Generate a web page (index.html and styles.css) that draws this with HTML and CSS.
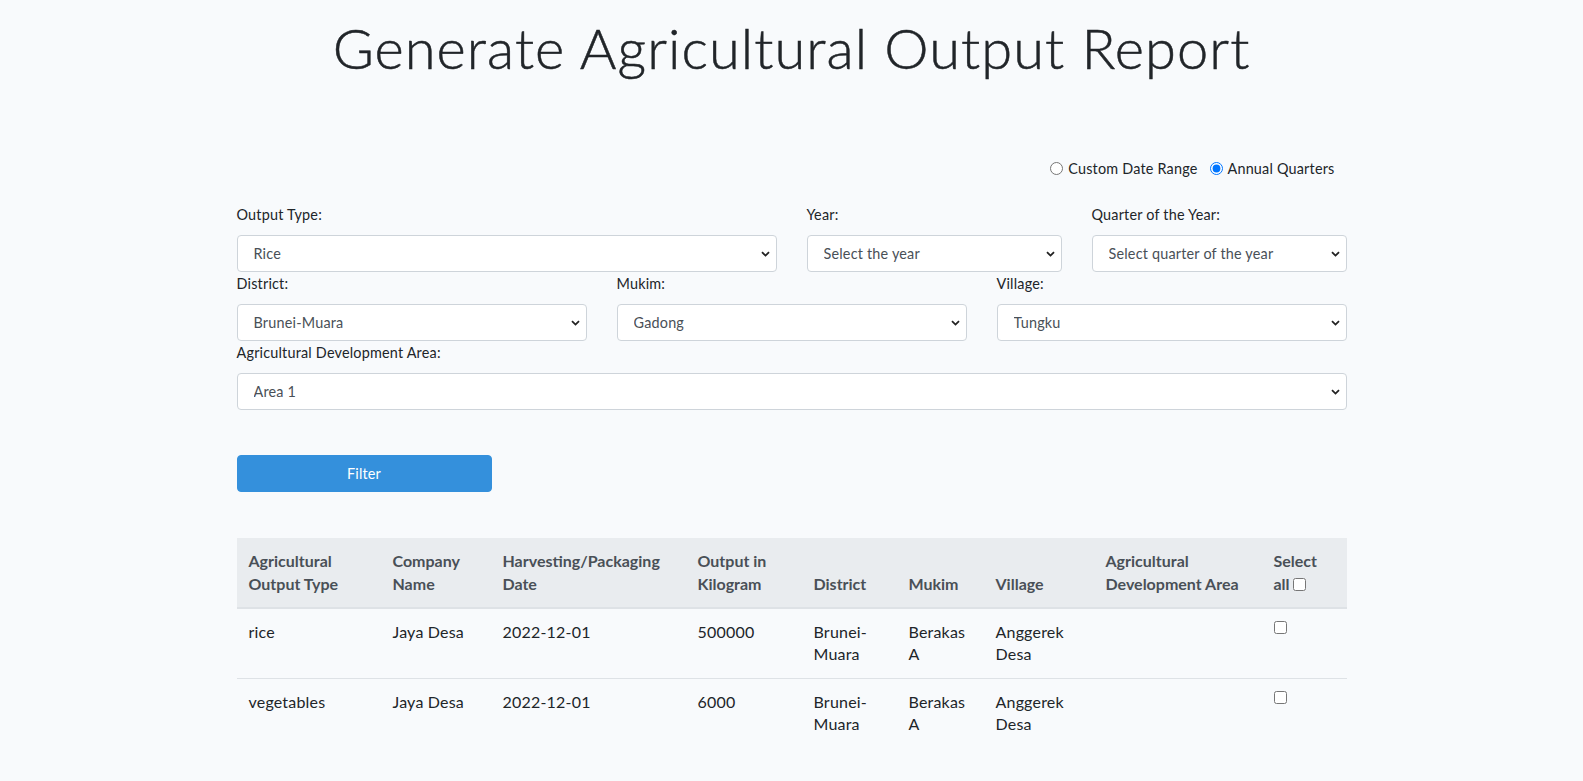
FILE: index.html
```html
<!DOCTYPE html>
<html lang="en">
<head>
<meta charset="utf-8">
<title>Generate Agricultural Output Report</title>
<link rel="stylesheet" href="styles.css">
</head>
<body>
<div class="container">
  <h1 class="title">Generate Agricultural Output Report</h1>

  <div class="mode-row">
    <label class="check-inline"><input type="radio" name="mode" class="radio"> Custom Date Range</label>
    <label class="check-inline"><input type="radio" name="mode" class="radio" checked> Annual Quarters</label>
  </div>

  <div class="form-row">
    <div class="field span-6">
      <label class="field-label">Output Type:</label>
      <select class="select"><option>Rice</option></select>
    </div>
    <div class="field span-3">
      <label class="field-label">Year:</label>
      <select class="select"><option>Select the year</option></select>
    </div>
    <div class="field span-3">
      <label class="field-label">Quarter of the Year:</label>
      <select class="select"><option>Select quarter of the year</option></select>
    </div>
  </div>

  <div class="form-row">
    <div class="field span-4">
      <label class="field-label">District:</label>
      <select class="select"><option>Brunei-Muara</option></select>
    </div>
    <div class="field span-4">
      <label class="field-label">Mukim:</label>
      <select class="select"><option>Gadong</option></select>
    </div>
    <div class="field span-4">
      <label class="field-label">Village:</label>
      <select class="select"><option>Tungku</option></select>
    </div>
  </div>

  <div class="form-row">
    <div class="field span-12">
      <label class="field-label">Agricultural Development Area:</label>
      <select class="select"><option>Area 1</option></select>
    </div>
  </div>

  <div class="button-row">
    <button class="btn-primary" type="button">Filter</button>
  </div>

  <table class="table">
    <colgroup>
      <col class="w-type"><col class="w-company"><col class="w-date"><col class="w-output"><col class="w-district"><col class="w-mukim"><col class="w-village"><col class="w-area"><col class="w-select">
    </colgroup>
    <thead>
      <tr>
        <th>Agricultural Output Type</th>
        <th>Company Name</th>
        <th>Harvesting/Packaging Date</th>
        <th>Output in Kilogram</th>
        <th>District</th>
        <th>Mukim</th>
        <th>Village</th>
        <th>Agricultural Development Area</th>
        <th>Select all <input type="checkbox" class="checkbox"></th>
      </tr>
    </thead>
    <tbody>
      <tr>
        <td>rice</td>
        <td>Jaya Desa</td>
        <td>2022-12-01</td>
        <td>500000</td>
        <td>Brunei-Muara</td>
        <td>Berakas A</td>
        <td>Anggerek Desa</td>
        <td></td>
        <td><input type="checkbox" class="checkbox row-check"></td>
      </tr>
      <tr>
        <td>vegetables</td>
        <td>Jaya Desa</td>
        <td>2022-12-01</td>
        <td>6000</td>
        <td>Brunei-Muara</td>
        <td>Berakas A</td>
        <td>Anggerek Desa</td>
        <td></td>
        <td><input type="checkbox" class="checkbox row-check"></td>
      </tr>
    </tbody>
  </table>
</div>
</body>
</html>
```

FILE: styles.css
```css
* { box-sizing: border-box; }

body {
  margin: 0;
  background: #f8fafc;
  color: #212529;
  font-family: "Lato", "Noto Sans", sans-serif;
  font-size: 14.4px;
  line-height: 1.6;
  letter-spacing: 0.2px;
}

.container {
  width: 1110px;
  margin: 0 auto;
}

.title {
  margin: 14px 0 0;
  font-size: 56px;
  font-weight: 300;
  line-height: 1.2;
  letter-spacing: 1.05px;
  text-align: center;
  -webkit-text-stroke: 0.5px currentColor;
}

.mode-row {
  display: flex;
  justify-content: flex-end;
  margin-top: 76px;
}

.check-inline {
  display: inline-flex;
  align-items: center;
  margin-right: 12px;
  line-height: 23px;
}

.radio {
  margin: 0 5px 0 0;
  width: 13px;
  height: 13px;
}

.form-row {
  display: flex;
  gap: 30px;
}

.mode-row + .form-row { margin-top: 23px; }

.field { min-width: 0; }
.span-6 { width: 540px; }
.span-3 { width: 255px; }
.span-4 { width: 350px; }
.span-12 { width: 1110px; }

.field-label {
  display: block;
  margin-bottom: 9px;
  line-height: 23px;
}

.select {
  display: block;
  width: 100%;
  height: 37px;
  padding: 6px 24px 6px 16px;
  font-family: inherit;
  font-size: 14.4px;
  letter-spacing: 0.2px;
  color: #495057;
  background-color: #fff;
  background-image: url("data:image/svg+xml,%3Csvg xmlns='http://www.w3.org/2000/svg' width='9' height='6' viewBox='0 0 9 6'%3E%3Cpath d='M1 1.2l3.5 3.4 3.5-3.4' fill='none' stroke='%23222' stroke-width='1.8'/%3E%3C/svg%3E");
  background-repeat: no-repeat;
  background-position: right 6px center;
  background-size: 9px 6px;
  border: 1px solid #ced4da;
  border-radius: 4px;
  appearance: none;
  -webkit-appearance: none;
}

.button-row {
  margin-top: 45px;
}

.btn-primary {
  display: block;
  width: 255px;
  height: 37px;
  padding: 6px 12px;
  font-family: inherit;
  font-size: 14.4px;
  letter-spacing: 0.2px;
  color: #fff;
  background: #3490dc;
  border: 1px solid #3490dc;
  border-radius: 4px;
}

.table {
  width: 1110px;
  margin-top: 46px;
  border-collapse: collapse;
  table-layout: fixed;
  font-size: 16px;
  line-height: 1.4;
}

.w-type { width: 144px; }
.w-company { width: 110px; }
.w-date { width: 195px; }
.w-output { width: 116px; }
.w-district { width: 95px; }
.w-mukim { width: 87px; }
.w-village { width: 110px; }
.w-area { width: 168px; }
.w-select { width: 85px; }

.table th,
.table td {
  padding: 12px;
  text-align: left;
}

.table th {
  vertical-align: bottom;
  font-weight: 700;
  letter-spacing: 0;
  color: #495057;
  background: #e9ecef;
  border-bottom: 2px solid #dee2e6;
}

.table td {
  vertical-align: top;
  border-top: 1px solid #dee2e6;
}

.checkbox {
  width: 13px;
  height: 13px;
  margin: 0;
  vertical-align: -1px;
}

.row-check {
  margin-top: 0;
  vertical-align: top;
}
```
